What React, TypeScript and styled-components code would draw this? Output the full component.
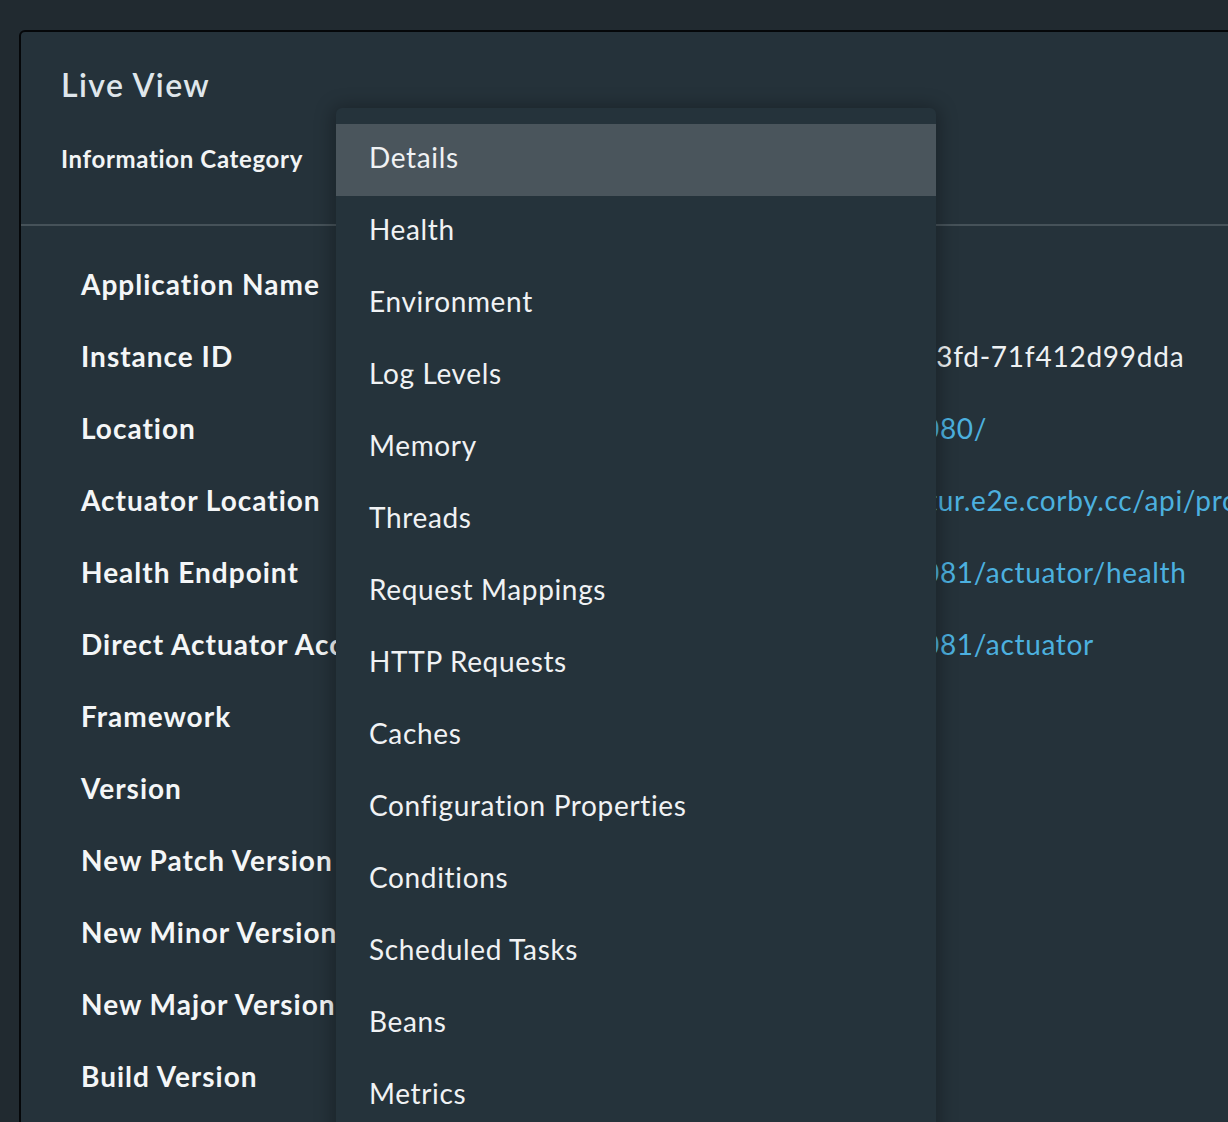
import React from "react";
import styled, { createGlobalStyle } from "styled-components";

const Global = createGlobalStyle`
  html, body {
    margin: 0;
    padding: 0;
    background: #212a30;
    overflow: hidden;
  }
  body {
    font-family: Lato, "Open Sans", sans-serif;
    -webkit-font-smoothing: antialiased;
  }
`;

const Page = styled.div`
  width: 1228px;
  height: 1122px;
  padding: 30px 0 0 19px;
  box-sizing: border-box;
  overflow: hidden;
`;

const Card = styled.section`
  position: relative;
  width: 1260px;
  height: 1140px;
  background: #25323a;
  border: 2px solid #050709;
  border-radius: 6px;
  box-sizing: border-box;
`;

const Header = styled.header`
  padding: 33px 0 0 40px;
  height: 194px;
  box-sizing: border-box;
  border-bottom: 2px solid #465259;
`;

const Title = styled.h1`
  margin: 0;
  font-size: 32px;
  line-height: 40px;
  font-weight: 600;
  color: #dfe6eb;
  letter-spacing: 1.4px;
`;

const CategoryRow = styled.div`
  display: flex;
  align-items: center;
  margin-top: 33px;
  height: 40px;
`;

const CategoryLabel = styled.label`
  font-size: 24px;
  font-weight: 700;
  color: #f2f4f5;
  letter-spacing: 0.65px;
`;

const Body = styled.div`
  padding: 22px 0 0 60px;
`;

const Row = styled.div`
  display: grid;
  grid-template-columns: 545px 1fr;
  align-items: center;
  height: 72px;
`;

const Label = styled.div`
  font-size: 28px;
  font-weight: 700;
  color: #f4f6f7;
  white-space: nowrap;
  letter-spacing: 1px;
`;

const Value = styled.div<{ $link?: boolean }>`
  font-size: 28px;
  font-weight: 400;
  color: ${(p) => (p.$link ? "#4cb0df" : "#eef1f3")};
  white-space: nowrap;
  letter-spacing: ${(p) => (p.$link ? "0.65px" : "0.75px")};
  overflow: hidden;
`;

const Menu = styled.ul`
  position: absolute;
  left: 315px;
  top: 76px;
  width: 600px;
  margin: 0;
  padding: 16px 0 0;
  list-style: none;
  background: #25333b;
  border-radius: 6px;
  box-shadow: 0 2px 18px 4px rgba(0, 0, 0, 0.28);
  height: 1100px;
`;

const MenuItem = styled.li<{ $active?: boolean }>`
  height: 72px;
  box-sizing: border-box;
  padding: 0 0 6px 33px;
  display: flex;
  align-items: center;
  font-size: 28px;
  color: #f0f2f4;
  letter-spacing: 0.65px;
  background: ${(p) => (p.$active ? "#4a555c" : "transparent")};
`;

const rows: { label: string; value?: string; link?: boolean }[] = [
  { label: "Application Name" },
  { label: "Instance ID", value: "9c1e47b2-4a0d-4c6e-83fd-71f412d99dda" },
  { label: "Location", value: "http://192.168.10.24:8080/", link: true },
  {
    label: "Actuator Location",
    value: "https://appliveview.tap.tur.e2e.corby.cc/api/proxy/petclinic",
    link: true,
  },
  { label: "Health Endpoint", value: "http://192.168.10.24:8081/actuator/health", link: true },
  { label: "Direct Actuator Access", value: "http://192.168.10.24:8081/actuator", link: true },
  { label: "Framework" },
  { label: "Version" },
  { label: "New Patch Version" },
  { label: "New Minor Version" },
  { label: "New Major Version" },
  { label: "Build Version" },
];

const categories = [
  "Details",
  "Health",
  "Environment",
  "Log Levels",
  "Memory",
  "Threads",
  "Request Mappings",
  "HTTP Requests",
  "Caches",
  "Configuration Properties",
  "Conditions",
  "Scheduled Tasks",
  "Beans",
  "Metrics",
];

export default function App() {
  return (
    <Page>
      <Global />
      <Card>
        <Header>
          <Title>Live View</Title>
          <CategoryRow>
            <CategoryLabel>Information Category</CategoryLabel>
          </CategoryRow>
        </Header>
        <Body>
          {rows.map((r) => (
            <Row key={r.label}>
              <Label>{r.label}</Label>
              <Value $link={r.link}>{r.value ?? ""}</Value>
            </Row>
          ))}
        </Body>
        <Menu>
          {categories.map((c, i) => (
            <MenuItem key={c} $active={i === 0}>
              {c}
            </MenuItem>
          ))}
        </Menu>
      </Card>
    </Page>
  );
}
